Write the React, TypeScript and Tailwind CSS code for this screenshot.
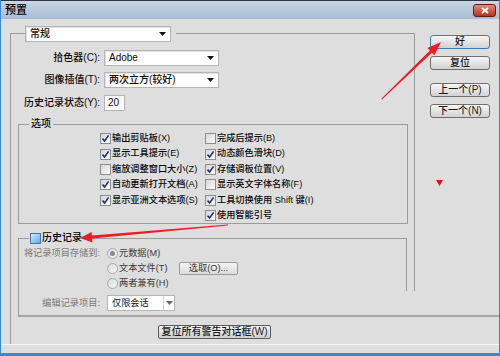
import React from 'react';

const Caret = ({ color = '#111' }: { color?: string }) => (
  <svg width="7" height="4" viewBox="0 0 7 4" className="shrink-0">
    <path d="M0 0h7L3.5 4z" fill={color} />
  </svg>
);

const Select = ({ text, className = '' }: { text: string; className?: string }) => (
  <div className={`h-[16px] bg-white border border-[#b4b4b4] shadow-[inset_1px_1px_0_#e2e2e2] flex items-center justify-between pl-[4px] pr-[4px] ${className}`}>
    <span>{text}</span>
    <Caret />
  </div>
);

const Check = ({ checked }: { checked?: boolean }) => (
  <span className="w-[11px] h-[11px] border border-[#8d8d8d] bg-linear-to-br from-[#d6d6d6] to-[#fbfbfb] flex items-center justify-center shrink-0">
    {checked && (
      <svg width="9" height="9" viewBox="0 0 9 9">
        <path d="M1.5 4.6 L3.6 7 L7.6 1.4" stroke="#1c2d7a" strokeWidth="1.6" fill="none" />
      </svg>
    )}
  </span>
);

const Radio = ({ on }: { on?: boolean }) => (
  <span className="w-[11px] h-[11px] rounded-full border border-[#a9a9a9] bg-linear-to-br from-[#dadada] to-[#f8f8f8] flex items-center justify-center shrink-0">
    {on && <span className="w-[5px] h-[5px] rounded-full bg-[#8a8a8a]" />}
  </span>
);

const Btn = ({ children, focus }: { children: React.ReactNode; focus?: boolean }) => (
  <div
    className={`w-[60px] h-[14px] rounded-[3px] border ${focus ? 'border-[#3a7cb5]' : 'border-[#6e6e6e]'} bg-linear-to-b from-[#f6f6f6] to-[#d2d2d2] flex items-center justify-center text-[#1a1a1a]`}
  >
    {children}
  </div>
);

const leftOpts: [string, boolean][] = [
  ['输出剪贴板(X)', true],
  ['显示工具提示(E)', true],
  ['缩放调整窗口大小(Z)', false],
  ['自动更新打开文档(A)', true],
  ['显示亚洲文本选项(S)', true],
];

const rightOpts: [string, boolean][] = [
  ['完成后提示(B)', false],
  ['动态颜色滑块(D)', true],
  ['存储调板位置(V)', true],
  ['显示英文字体名称(F)', false],
  ['工具切换使用 Shift 键(I)', true],
  ['使用智能引号', true],
];

export default function App() {
  return (
    <div className="relative w-[500px] h-[356px] overflow-hidden bg-[#dedede] border-x border-b-[3px] border-[#3b89c9] flex flex-col font-['Liberation_Sans','Noto_Sans_CJK_SC',sans-serif] text-[10px] leading-none text-[#0a0a0a] font-medium">
      {/* title bar */}
      <div className="h-[19px] shrink-0 border-t border-[#2b3440] bg-linear-to-b from-[#c9d7e6] to-[#a8bcd1] flex items-center justify-between pl-[4px] pr-[3px]">
        <span className="text-[11px] text-black">预置</span>
        <div className="w-[23px] h-[13px] rounded-[3px] border border-[#6b1a12] bg-linear-to-b from-[#e08a7c] to-[#b3301f] flex items-center justify-center">
          <svg width="8" height="7" viewBox="0 0 8 7">
            <path d="M1 1 L7 6 M7 1 L1 6" stroke="#fff" strokeWidth="1.8" />
          </svg>
        </div>
      </div>

      {/* upper section */}
      <div className="flex shrink-0">
        <div className="ml-[9px] w-[405px]">
          <div className="mt-[7px] h-[16px] flex">
            <div className="w-[15px] h-[9px] self-end border-t border-l border-[#9c9c9c]" />
            <Select text="常规" className="w-[146px]" />
            <div className="flex-1 ml-[5px] h-[9px] self-end border-t border-r border-[#9c9c9c]" />
          </div>
          <div className="border-x border-[#9c9c9c] flex flex-col">
            <div className="mt-[8px] flex items-center">
              <span className="w-[89px] text-right">拾色器(C):</span>
              <Select text="Adobe" className="ml-[4px] w-[115px]" />
            </div>
            <div className="mt-[6px] flex items-center">
              <span className="w-[89px] text-right">图像插值(T):</span>
              <Select text="两次立方(较好)" className="ml-[4px] w-[115px]" />
            </div>
            <div className="mt-[7px] flex items-center">
              <span className="w-[89px] text-right">历史记录状态(Y):</span>
              <div className="ml-[4px] w-[21px] h-[16px] bg-white border border-[#b4b4b4] flex items-center pl-[3px]">20</div>
            </div>

            <fieldset className="mt-[6px] ml-[7px] w-[390px] border border-[#9c9c9c] px-[10px]">
              <legend className="px-[2px] h-[14px] leading-[14px]">选项</legend>
              <div className="pl-[71px] flex text-[9.2px]">
                <div className="w-[105px] flex flex-col">
                  {leftOpts.map(([t, c]) => (
                    <div key={t} className="h-[15.4px] flex items-center gap-[1px] whitespace-nowrap">
                      <Check checked={c} />
                      <span>{t}</span>
                    </div>
                  ))}
                </div>
                <div className="flex flex-col">
                  {rightOpts.map(([t, c]) => (
                    <div key={t} className="h-[15.4px] flex items-center gap-[1px] whitespace-nowrap">
                      <Check checked={c} />
                      <span>{t}</span>
                    </div>
                  ))}
                </div>
              </div>
            </fieldset>

            <fieldset className="mt-[7px] ml-[7px] w-[389px] border border-b-0 border-[#9c9c9c] pl-[10px]">
              <legend className="px-[1px] h-[14px] flex items-center gap-[1px]">
                <span className="w-[11px] h-[11px] border border-[#3a79b6] bg-linear-to-br from-[#d4ebfc] to-[#5fa8e4]" />
                <span className="text-black">历史记录</span>
              </legend>
              <div className="mt-[1px] grid grid-cols-[71px_1fr] gap-x-[7px] text-[9.2px] font-normal">
                <span className="text-[#7a7a7a] h-[15px] flex items-center justify-end whitespace-nowrap">将记录项目存储到:</span>
                <div className="flex flex-col text-[#3c3c3c]">
                  <div className="h-[15px] flex items-center gap-[1px]">
                    <Radio on />
                    <span>元数据(M)</span>
                  </div>
                  <div className="h-[15px] flex items-center">
                    <div className="w-[72px] flex items-center gap-[1px]">
                      <Radio />
                      <span>文本文件(T)</span>
                    </div>
                    <div className="w-[59px] h-[13px] rounded-[2px] border border-[#9a9a9a] bg-linear-to-b from-[#f4f4f4] to-[#dcdcdc] flex items-center justify-center text-[#333]">
                      选取(O)...
                    </div>
                  </div>
                  <div className="h-[15px] flex items-center gap-[1px]">
                    <Radio />
                    <span>两者兼有(H)</span>
                  </div>
                </div>
              </div>
            </fieldset>
          </div>
        </div>

        <div className="ml-[15px] flex flex-col">
          <div className="mt-[16px]">
            <Btn focus>好</Btn>
          </div>
          <div className="mt-[7px]">
            <Btn>复位</Btn>
          </div>
          <div className="mt-[13px]">
            <Btn>上一个(P)</Btn>
          </div>
          <div className="mt-[7px]">
            <Btn>下一个(N)</Btn>
          </div>
          <svg width="7" height="6" viewBox="0 0 7 6" className="mt-[62px] ml-[6px]">
            <path d="M0 0h7L3.5 6z" fill="#e8141b" />
          </svg>
        </div>
      </div>

      {/* edit row below history options */}
      <div className="ml-[9px] h-[24px] shrink-0 border-l border-[#9c9c9c] flex">
        <div className="ml-[7px] flex-1 border-l border-[#9c9c9c] pt-[4px] flex items-start text-[9.2px] font-normal">
          <span className="w-[81px] h-[16px] flex items-center justify-end text-[#7a7a7a]">编辑记录项目:</span>
          <div className="ml-[7px] w-[68px] h-[16px] bg-white border border-[#b4b4b4] flex items-center">
            <span className="flex-1 pl-[4px] text-[#111]">仅限会话</span>
            <div className="w-[11px] h-full border-l border-[#d0d0d0] flex items-center justify-center">
              <Caret color="#666" />
            </div>
          </div>
        </div>
      </div>

      <div className="ml-[9px] h-[2px] shrink-0 border-l border-[#9c9c9c] flex">
        <div className="ml-[7px] flex-1 bg-[#a6a6a6]" />
      </div>

      <div className="ml-[9px] h-[27px] shrink-0 border-l border-[#9c9c9c] pt-[8px] pl-[147px]">
        <div className="w-[113px] h-[14px] rounded-[2px] border border-[#5a5a5a] bg-linear-to-b from-[#f4f4f4] to-[#cfcfcf] flex items-center justify-center text-[#1a1a1a]">
          复位所有警告对话框(W)
        </div>
      </div>

      <div className="h-[1px] shrink-0 bg-[#f6f6f6]" />

      {/* annotation arrows */}
      <svg className="absolute left-[-1px] top-0 pointer-events-none" width="500" height="356" viewBox="0 0 500 356">
        <polygon points="382,99.5 381.3,98.7 429.9,50.6 427.4,48.1 441,42 434.4,55.3 431.9,52.8" fill="#ee1c24" />
        <polygon points="228,224.6 228.1,225.6 92.1,238.5 92.4,242.5 80,238 91.6,232 91.9,235.5" fill="#ee1c24" />
      </svg>
    </div>
  );
}
